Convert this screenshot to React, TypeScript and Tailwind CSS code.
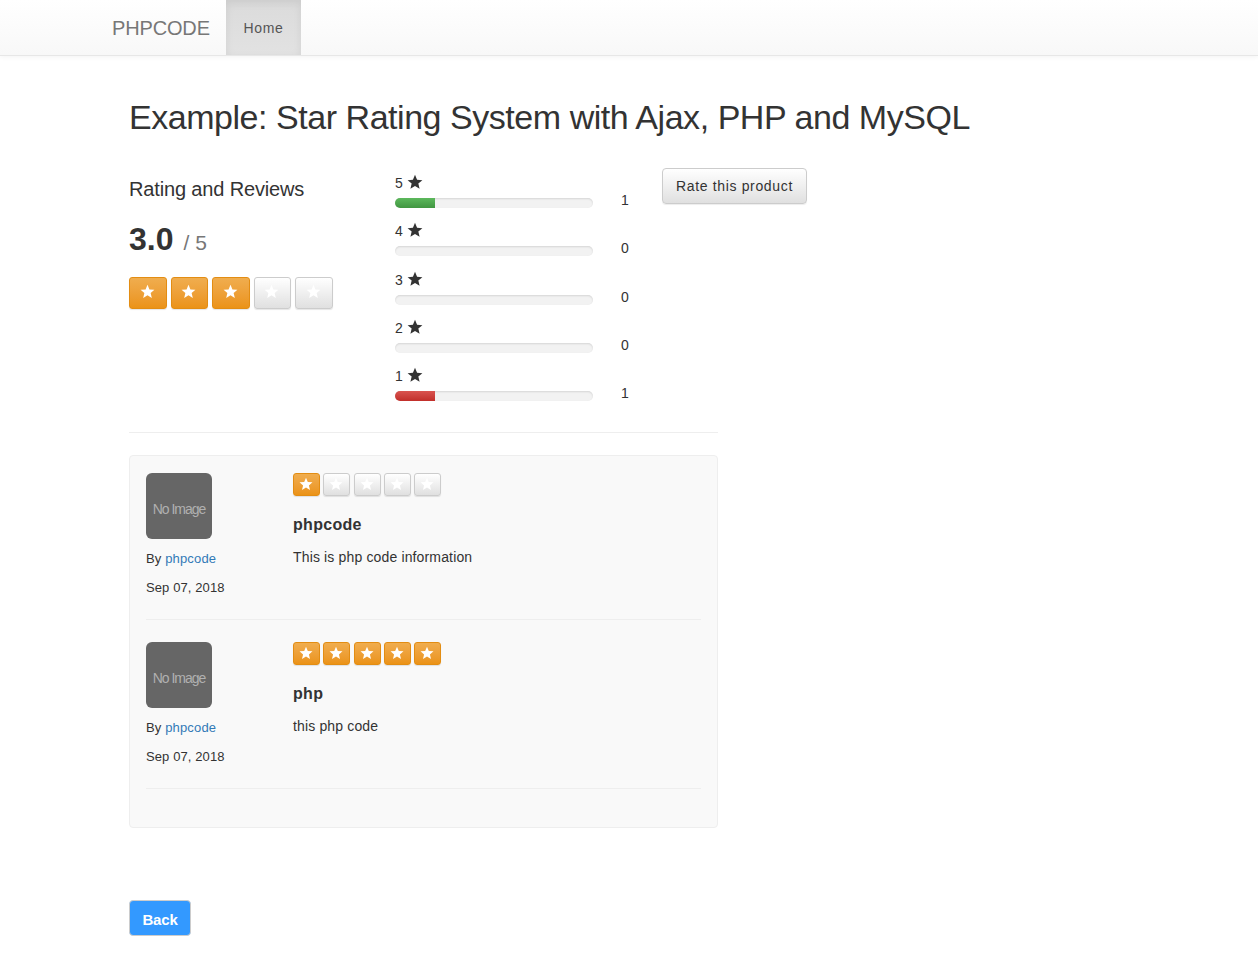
const F = "[font-family:'Liberation_Sans',Arial,sans-serif]";

function StarIcon({ className }: { className: string }) {
  return (
    <svg viewBox="0 0 24 24" className={className} fill="currentColor" aria-hidden="true">
      <path d="M12 1.2l3.1 7.4 8 .6-6.1 5.2 1.9 7.8L12 18.1l-6.9 4.1L7 14.4.9 9.2l8-.6z" />
    </svg>
  );
}

function RateBox({ on, big }: { on: boolean; big?: boolean }) {
  const size = big ? "w-[37.5px] h-[32px] pb-[3px]" : "w-[27px] h-[23px] pb-[1px]";
  const tone = on
    ? "bg-gradient-to-b from-[#f0ad4e] to-[#eb9316] border-[#e38d13]"
    : "bg-gradient-to-b from-[#ffffff] to-[#e0e0e0] border-[#cccccc]";
  return (
    <span className={`${size} ${tone} flex items-center justify-center pr-[1px] rounded-[3px] border shadow-[0_1px_1px_rgba(0,0,0,0.1)]`}>
      <StarIcon className={big ? "w-[15px] h-[15px] text-white" : "w-[14px] h-[14px] text-white"} />
    </span>
  );
}

function BarRow({ n, count, fill }: { n: number; count: number; fill?: string }) {
  return (
    <div className="h-[48.25px] flex items-start">
      <div className="w-[198px]">
        <div className="h-[20px] flex items-center gap-[4px] text-[14px] leading-[20px] text-[#333] mt-[5px]">
          <span className="tracking-[0.6px]">{n}</span>
          <StarIcon className="w-[16px] h-[16px] text-[#333] -mt-[2px]" />
        </div>
        <div className="h-[10px] mt-[5px] rounded-[5px] overflow-hidden bg-[#f2f2f2] shadow-[inset_0_1px_2px_rgba(0,0,0,0.12)]">
          {fill && <div className={`h-full w-[40px] ${fill}`} />}
        </div>
      </div>
      <div className="ml-[28px] text-[14px] leading-[20px] text-[#333] mt-[22px]">{count}</div>
    </div>
  );
}

function Review({ stars, title, body }: { stars: number; title: string; body: string }) {
  return (
    <div className="h-[147px] flex border-b border-[#eeeeee] mb-[22px]">
      <div className="w-[147px]">
        <div className="w-[66px] h-[66px] rounded-[6px] bg-[#666666] flex items-center justify-center pt-[7px] text-[14px] tracking-[-1px] text-[#b0b0b0]">
          No Image
        </div>
        <div className="mt-[10px] text-[13px] leading-[20px] text-[#333] tracking-[0.15px]">
          By <span className="text-[#337ab7]">phpcode</span>
        </div>
        <div className="mt-[9px] text-[13px] leading-[20px] text-[#333] tracking-[0.1px]">Sep 07, 2018</div>
      </div>
      <div>
        <div className="flex gap-[3.25px]">
          {[1, 2, 3, 4, 5].map((i) => (
            <RateBox key={i} on={i <= stars} />
          ))}
        </div>
        <div className="mt-[19px] text-[16px] leading-[20px] font-bold tracking-[0.3px] text-[#333]">{title}</div>
        <div className="mt-[12px] text-[14px] leading-[20px] tracking-[0.15px] text-[#333]">{body}</div>
      </div>
    </div>
  );
}

export default function App() {
  return (
    <div className={`${F} bg-white min-h-[958px] text-[#333]`}>
      <nav className="h-[56px] pl-[97px] flex bg-gradient-to-b from-white to-[#f8f8f8] border-b border-[#e7e7e7] shadow-[0_1px_5px_rgba(0,0,0,0.05)]">
        <div className="px-[15px] w-[129px] flex items-center text-[20px] tracking-[-0.15px] text-[#777] pt-[1px]">PHPCODE</div>
        <div className="w-[75px] h-[55px] flex items-center justify-center pt-[1px] text-[14px] tracking-[0.7px] text-[#555] bg-gradient-to-b from-[#dbdbdb] to-[#e2e2e2] shadow-[inset_0_3px_9px_rgba(0,0,0,0.075)]">
          Home
        </div>
      </nav>
      <main className="pl-[129px]">
        <h1 className="mt-[39px] text-[34px] leading-[44px] font-normal text-[#333] tracking-[-0.46px]">
          Example: Star Rating System with Ajax, PHP and MySQL
        </h1>
        <div className="flex mt-[29px]">
          <div className="w-[266px]">
            <div className="mt-[9px] text-[20px] leading-[24px] tracking-[-0.15px] text-[#333]">Rating and Reviews</div>
            <div className="mt-[20px] flex items-baseline leading-[36px]">
              <span className="text-[32px] font-bold text-[#333]">3.0</span>
              <span className="ml-[10px] text-[21px] text-[#777]">/ 5</span>
            </div>
            <div className="mt-[16px] flex gap-[4px]">
              {[1, 2, 3, 4, 5].map((i) => (
                <RateBox key={i} on={i <= 3} big />
              ))}
            </div>
          </div>
          <div className="w-[267px]">
            <BarRow n={5} count={1} fill="bg-gradient-to-b from-[#5cb85c] to-[#419641]" />
            <BarRow n={4} count={0} />
            <BarRow n={3} count={0} />
            <BarRow n={2} count={0} />
            <BarRow n={1} count={1} fill="bg-gradient-to-b from-[#d9534f] to-[#c12e2a]" />
          </div>
          <div>
            <button className="h-[36px] w-[145px] pt-[1px] rounded-[4px] border border-[#cccccc] bg-gradient-to-b from-white to-[#e0e0e0] text-[14px] tracking-[0.65px] text-[#333] shadow-[0_1px_1px_rgba(0,0,0,0.075)]">
              Rate this product
            </button>
          </div>
        </div>
        <div className="w-[589px] mt-[23px] border-t border-[#eeeeee]" />
        <div className="w-[589px] h-[373px] mt-[22px] pt-[17px] px-[16px] rounded-[4px] border border-[#eeeeee] bg-[#f9f9f9]">
          <Review stars={1} title="phpcode" body="This is php code information" />
          <Review stars={5} title="php" body="this php code" />
        </div>
        <button className="mt-[72px] w-[62px] h-[36px] pt-[3px] rounded-[4px] border border-[#cccccc] bg-[#3399ff] text-white text-[15px] tracking-[-0.2px] font-bold">
          Back
        </button>
      </main>
    </div>
  );
}
